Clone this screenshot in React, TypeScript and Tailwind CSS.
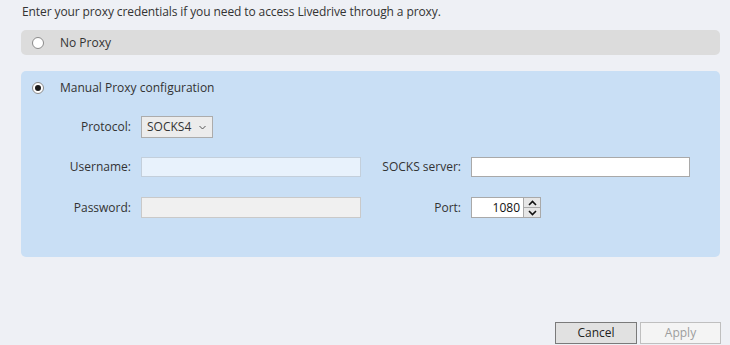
const Radio = ({ checked }: { checked?: boolean }) => (
  <span className="flex h-[12px] w-[12px] items-center justify-center rounded-full border border-[#8a8a8a] bg-white">
    {checked && <span className="h-[6px] w-[6px] rounded-full bg-[#1a1a1a]" />}
  </span>
);

const Label = ({ children }: { children: string }) => (
  <span className="text-right text-[#333]">{children}</span>
);

const App = () => {
  return (
    <div className="flex h-[345px] w-[730px] flex-col bg-[#eef0f5] font-['Open_Sans',sans-serif] text-[12px] text-[#333]">
      <p className="ml-[22px] mt-[4px] leading-[16px] tracking-[-0.1px]">
        Enter your proxy credentials if you need to access Livedrive through a proxy.
      </p>

      {/* No proxy option */}
      <div className="ml-[21px] mt-[10px] flex h-[25px] w-[699px] items-center rounded-[5px] bg-[#dcdcdc]">
        <span className="ml-[11px]">
          <Radio />
        </span>
        <span className="ml-[16px]">No Proxy</span>
      </div>

      {/* Manual proxy */}
      <div className="ml-[21px] mt-[16px] h-[186px] w-[699px] rounded-[5px] bg-[#c9dff5] pt-[7px]">
        <div className="flex h-[20px] items-center">
          <span className="ml-[11px]">
            <Radio checked />
          </span>
          <span className="ml-[16px]">Manual Proxy configuration</span>
        </div>

        <div className="mt-[18px] grid grid-cols-[110px_220px_90px_219px] items-center gap-x-[10px]">
          <Label>Protocol:</Label>
          <div>
            <div className="flex h-[22px] w-[72px] items-center justify-between border border-[#acacac] bg-[#ececec] pl-[5px] pr-[6px]">
              <span>SOCKS4</span>
              <svg width="7" height="5" viewBox="0 0 7 5" className="mt-[1px]">
                <path d="M0.5 1 L3.5 4 L6.5 1" fill="none" stroke="#555" strokeWidth="1" />
              </svg>
            </div>
          </div>
          <span />
          <span />
        </div>

        <div className="mt-[19px] grid grid-cols-[110px_220px_90px_219px] items-center gap-x-[10px]">
          <Label>Username:</Label>
          <div className="h-[20px] border border-[#c3cfdb] bg-[#e8f2fc]" />
          <Label>SOCKS server:</Label>
          <div className="h-[20px] border border-[#a9a9a9] bg-white" />
        </div>

        <div className="mt-[20px] grid grid-cols-[110px_220px_90px_219px] items-center gap-x-[10px]">
          <Label>Password:</Label>
          <div className="h-[21px] border border-[#c9c9c9] bg-[#f0f0f0]" />
          <Label>Port:</Label>
          <div className="flex h-[21px] w-[70px] items-center border border-[#a9a9a9] bg-white">
            <span className="flex-1 pr-[3px] text-right text-[#111]">1080</span>
            <div className="flex h-full w-[17px] flex-col border-l border-[#a9a9a9]">
              <div className="flex flex-1 items-center justify-center border-b border-[#a9a9a9] bg-[#e6e6e6]">
                <svg width="9" height="6" viewBox="0 0 9 6">
                  <path d="M1 5 L4.5 1.5 L8 5" fill="none" stroke="#111" strokeWidth="1.6" />
                </svg>
              </div>
              <div className="flex flex-1 items-center justify-center bg-[#e6e6e6]">
                <svg width="9" height="6" viewBox="0 0 9 6">
                  <path d="M1 1 L4.5 4.5 L8 1" fill="none" stroke="#111" strokeWidth="1.6" />
                </svg>
              </div>
            </div>
          </div>
        </div>
      </div>

      {/* Buttons */}
      <div className="mt-auto mb-[1px] flex justify-end gap-[3px] pr-[9px]">
        <button className="h-[22px] w-[82px] border border-[#7a7a7a] bg-[#e1e1e1] text-[#222]">
          Cancel
        </button>
        <button className="h-[22px] w-[81px] border border-[#bfbfbf] bg-[#f4f4f4] text-[#9d9d9d]">
          Apply
        </button>
      </div>
    </div>
  );
};

export default App;
